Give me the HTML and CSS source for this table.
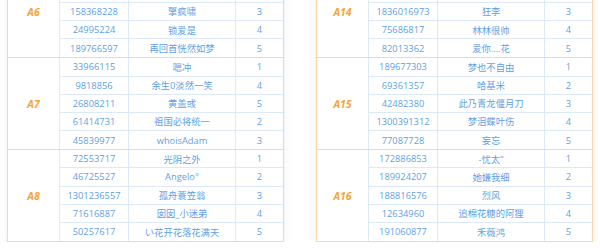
FILE: index.html
```html
<!DOCTYPE html>
<html lang="zh-CN">
<head>
<meta charset="utf-8">
<title>分组名单</title>
<link rel="stylesheet" href="styles.css">
</head>
<body>
<div class="board">
  <div class="card">
    <div class="group">
      <div class="label">A6</div>
      <div class="cell"></div><div class="cell sep"></div><div class="cell sep"></div>
      <div class="cell"></div><div class="cell sep"></div><div class="cell sep"></div>
      <div class="cell">158368228</div><div class="cell sep">擎疯啸</div><div class="cell sep">3</div>
      <div class="cell">24995224</div><div class="cell sep">锁爱是</div><div class="cell sep">4</div>
      <div class="cell">189766597</div><div class="cell sep">再回首恍然如梦</div><div class="cell sep">5</div>
    </div>
    <div class="group">
      <div class="label">A7</div>
      <div class="cell">33966115</div><div class="cell sep">嗯冲</div><div class="cell sep">1</div>
      <div class="cell">9818856</div><div class="cell sep">余生0淡然一笑</div><div class="cell sep">4</div>
      <div class="cell">26808211</div><div class="cell sep">黄盖彧</div><div class="cell sep">5</div>
      <div class="cell">61414731</div><div class="cell sep">祖国必将统一</div><div class="cell sep">2</div>
      <div class="cell">45839977</div><div class="cell sep">whoisAdam</div><div class="cell sep">3</div>
    </div>
    <div class="group">
      <div class="label">A8</div>
      <div class="cell">72553717</div><div class="cell sep">光阴之外</div><div class="cell sep">1</div>
      <div class="cell">46725527</div><div class="cell sep">Angelo°</div><div class="cell sep">2</div>
      <div class="cell">1301236557</div><div class="cell sep">孤舟蓑笠翁</div><div class="cell sep">3</div>
      <div class="cell">71616887</div><div class="cell sep">囡囡_小迷弟</div><div class="cell sep">4</div>
      <div class="cell">50257617</div><div class="cell sep">い花开花落花满天</div><div class="cell sep">5</div>
    </div>
  </div>
  <div class="card">
    <div class="group">
      <div class="label">A14</div>
      <div class="cell"></div><div class="cell sep"></div><div class="cell sep"></div>
      <div class="cell"></div><div class="cell sep"></div><div class="cell sep"></div>
      <div class="cell">1836016973</div><div class="cell sep">狂李</div><div class="cell sep">3</div>
      <div class="cell">75686817</div><div class="cell sep">林林很帅</div><div class="cell sep">4</div>
      <div class="cell">82013362</div><div class="cell sep">爱你....花</div><div class="cell sep">5</div>
    </div>
    <div class="group">
      <div class="label">A15</div>
      <div class="cell">189677303</div><div class="cell sep">梦也不自由</div><div class="cell sep">1</div>
      <div class="cell">69361357</div><div class="cell sep">哈基米</div><div class="cell sep">2</div>
      <div class="cell">42482380</div><div class="cell sep">此乃青龙偃月刀</div><div class="cell sep">3</div>
      <div class="cell">1300391312</div><div class="cell sep">梦泪蝶叶伤</div><div class="cell sep">4</div>
      <div class="cell">77087728</div><div class="cell sep">妄忘</div><div class="cell sep">5</div>
    </div>
    <div class="group">
      <div class="label">A16</div>
      <div class="cell">172886853</div><div class="cell sep">-忧太”</div><div class="cell sep">1</div>
      <div class="cell">189924207</div><div class="cell sep">她嫌我细</div><div class="cell sep">2</div>
      <div class="cell">188816576</div><div class="cell sep">烈风</div><div class="cell sep">3</div>
      <div class="cell">12634960</div><div class="cell sep">追棉花糖的阿狸</div><div class="cell sep">4</div>
      <div class="cell">191060877</div><div class="cell sep">禾薇鸿</div><div class="cell sep">5</div>
    </div>
  </div>
</div>
</body>
</html>
```
FILE: styles.css
```css
html, body {
  margin: 0;
  padding: 0;
  background: #ffffff;
}

body {
  font-family: "Open Sans", "Noto Sans CJK SC", sans-serif;
  overflow: hidden;
}

.board {
  display: flex;
  gap: 32px;
  padding-left: 7px;
  margin-top: -34.5px;
}

.card {
  width: 277px;
  box-sizing: border-box;
  background: #ffffff;
  border: 1px solid #fbd6ad;
  box-shadow: 0 0 8px rgba(120, 120, 140, 0.12);
}

.group {
  display: grid;
  grid-template-columns: 52px 68px 107px 1fr;
  grid-template-rows: repeat(5, 18.18px);
  border-bottom: 1px solid #fbd6ad;
}

.group:last-child {
  border-bottom: none;
}

.label {
  grid-row: 1 / -1;
  grid-column: 1;
  display: flex;
  align-items: center;
  justify-content: center;
  border-right: 1px solid #dce9f8;
  color: #f5a434;
  font-weight: 700;
  font-style: italic;
  font-size: 10.5px;
}

.cell {
  box-sizing: border-box;
  display: flex;
  align-items: center;
  justify-content: center;
  border-bottom: 1px solid #dde9f8;
  color: #5f9fe4;
  font-size: 9.3px;
  white-space: nowrap;
}

.cell:nth-last-child(-n+3) {
  border-bottom: none;
}

.sep {
  border-left: 1px solid #dde9f8;
}
```
